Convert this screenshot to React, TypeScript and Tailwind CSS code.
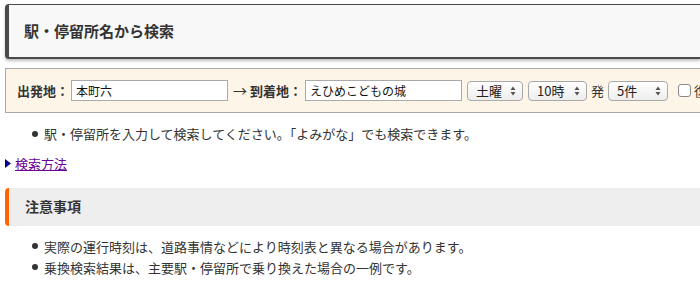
import React from 'react'

const font = { fontFamily: '"Noto Sans CJK JP", "Noto Sans", sans-serif' }

function Arrows() {
  return (
    <svg width="6" height="10" viewBox="0 0 6 10" className="shrink-0">
      <path d="M3 0.5 L5.5 4 H0.5 Z" fill="#555" />
      <path d="M3 9.5 L5.5 6 H0.5 Z" fill="#555" />
    </svg>
  )
}

function FakeSelect({ label, width }: { label: string; width: string }) {
  return (
    <div
      className={`flex h-[20px] ${width} shrink-0 items-center justify-between rounded-[4px] border border-[#a9a9a9] bg-gradient-to-b from-white to-[#ededed] pl-[8px] pr-[6px] text-[13px] text-[#222]`}
    >
      <span className="leading-none">{label}</span>
      <Arrows />
    </div>
  )
}

export default function App() {
  return (
    <div className="h-[300px] w-[700px] overflow-hidden bg-white text-[#333]" style={font}>
      <div className="pl-[5px] pt-[4px]">
        <div className="flex h-[55px] items-center rounded-l-[4px] border-t border-b-2 border-l-4 border-[#4a4a4a] bg-[#f8f8f8] pl-[15px] shadow-[0_2px_3px_rgba(0,0,0,0.25)]">
          <h1 className="text-[15px] font-bold text-[#333]">駅・停留所名から検索</h1>
        </div>

        <div className="mt-[9px] flex h-[45px] items-center border border-r-0 border-[#aaa] bg-[#fdf5e8] pl-[11px] text-[13px] whitespace-nowrap">
          <span className="text-[13px] font-bold">出発地：</span>
          <div className="ml-[2px] flex h-[21px] w-[157px] shrink-0 items-center border border-[#aaa] bg-white px-[4px] text-[12px] text-[#111]">
            本町六
          </div>
          <span className="ml-[5px] text-[14px]">→</span>
          <span className="ml-[3px] text-[13px] font-bold">到着地：</span>
          <div className="ml-[3px] flex h-[21px] w-[157px] shrink-0 items-center border border-[#aaa] bg-white px-[4px] text-[12px] text-[#111]">
            えひめこどもの城
          </div>
          <div className="ml-[5px]">
            <FakeSelect label="土曜" width="w-[56px]" />
          </div>
          <div className="ml-[5px]">
            <FakeSelect label="10時" width="w-[59px]" />
          </div>
          <span className="ml-[4px] text-[13px]">発</span>
          <div className="ml-[4px]">
            <FakeSelect label="5件" width="w-[60px]" />
          </div>
          <div className="ml-[10px] h-[13px] w-[13px] shrink-0 rounded-[3px] border border-[#888] bg-white" />
          <span className="ml-[3px] text-[13px]">復路</span>
        </div>
      </div>

      <ul className="mt-[11px] pl-[32px] text-[13px] leading-[20px]">
        <li className="flex items-center">
          <span className="mr-[6px] inline-block h-[6px] w-[6px] rounded-full bg-[#333]" />
          駅・停留所を入力して検索してください。「よみがな」でも検索できます。
        </li>
      </ul>

      <div className="mt-[10px] flex items-center pl-[5px] text-[13px]">
        <svg width="6" height="9" viewBox="0 0 6 9" className="mr-[4px]">
          <path d="M0 0 L6 4.5 L0 9 Z" fill="#00008b" />
        </svg>
        <a href="#" className="text-[#660099] underline">
          検索方法
        </a>
      </div>

      <div className="ml-[5px] mt-[14px] flex h-[38px] items-center rounded-l-[4px] border-l-4 border-[#ff6600] bg-[#eeeeee] pl-[16px]">
        <h2 className="text-[14px] font-bold text-[#333]">注意事項</h2>
      </div>

      <ul className="mt-[10px] pl-[32px] text-[13px] leading-[21px]">
        <li className="flex items-center">
          <span className="mr-[6px] inline-block h-[6px] w-[6px] rounded-full bg-[#333]" />
          実際の運行時刻は、道路事情などにより時刻表と異なる場合があります。
        </li>
        <li className="flex items-center">
          <span className="mr-[6px] inline-block h-[6px] w-[6px] rounded-full bg-[#333]" />
          乗換検索結果は、主要駅・停留所で乗り換えた場合の一例です。
        </li>
      </ul>
    </div>
  )
}
